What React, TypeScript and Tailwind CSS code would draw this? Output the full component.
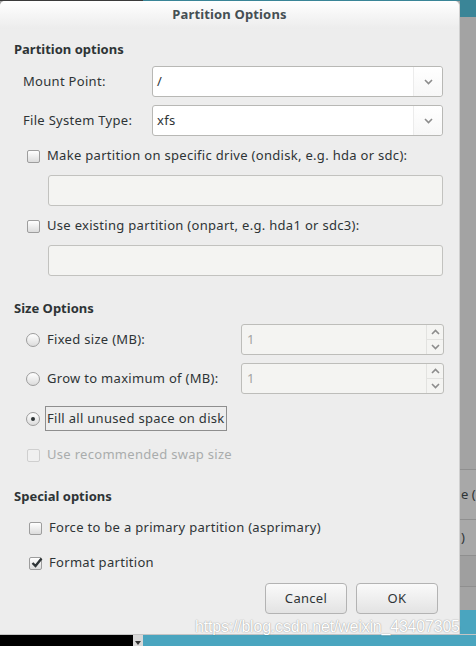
import React from "react";

const font = { fontFamily: '"Noto Sans", "DejaVu Sans", sans-serif' };

function Chevron({ up = false }: { up?: boolean }) {
  return (
    <svg width="9" height="6" viewBox="0 0 9 6">
      <path
        d={up ? "M1 5 L4.5 1.5 L8 5" : "M1 1 L4.5 4.5 L8 1"}
        fill="none"
        stroke="#8c8c8c"
        strokeWidth="1.6"
      />
    </svg>
  );
}

function Check({ checked = false, disabled = false }: { checked?: boolean; disabled?: boolean }) {
  return (
    <div
      className={`w-[13px] h-[13px] rounded-[2px] border relative shrink-0 ${
        disabled
          ? "border-[#cfcfcf] bg-[#f0f0f0]"
          : "border-[#9d9d9d] bg-gradient-to-b from-[#ffffff] to-[#dcdcdc]"
      }`}
    >
      {checked && (
        <svg className="absolute left-[0px] top-[-2px]" width="14" height="14" viewBox="0 0 14 14">
          <path d="M2.5 7 L5.5 10 L11.5 2.5" fill="none" stroke="#2e3436" strokeWidth="2.4" />
        </svg>
      )}
    </div>
  );
}

function Radio({ checked = false }: { checked?: boolean }) {
  return (
    <div className="w-[14px] h-[14px] rounded-full border border-[#9d9d9d] bg-gradient-to-b from-[#ffffff] to-[#dcdcdc] flex items-center justify-center shrink-0">
      {checked && <div className="w-[4px] h-[4px] rounded-full bg-[#2e3436]" />}
    </div>
  );
}

function Combo({ value }: { value: string }) {
  return (
    <div className="w-[291px] h-[31px] bg-white border border-[#b8b8b5] rounded-[3px] flex">
      <div className="flex-1 flex items-center pl-[4px] text-[13px] text-[#2e3436]">{value}</div>
      <div className="w-[29px] border-l border-[#ececec] flex items-center justify-center bg-gradient-to-b from-[#ffffff] to-[#f7f7f7] rounded-r-[3px]">
        <Chevron />
      </div>
    </div>
  );
}

function Spin() {
  return (
    <div className="w-[203px] h-[31px] bg-[#f4f4f2] border border-[#bdbdba] rounded-[3px] flex">
      <div className="flex-1 flex items-center pl-[5px] text-[13px] text-[#a3a3a3]">1</div>
      <div className="w-[17px] border-l border-[#e2e2e0] flex flex-col">
        <div className="flex-1 flex items-center justify-center border-b border-[#e2e2e0]">
          <Chevron up />
        </div>
        <div className="flex-1 flex items-center justify-center">
          <Chevron />
        </div>
      </div>
    </div>
  );
}

function Entry() {
  return <div className="ml-[48px] w-[395px] h-[31px] bg-[#f4f4f2] border border-[#c2c2bf] rounded-[3px]" />;
}

export default function App() {
  return (
    <div className="w-[476px] h-[646px] flex flex-col overflow-hidden bg-[#a4a4a4] relative" style={font}>
      {/* top strip */}
      <div className="h-[1px] flex shrink-0">
        <div className="w-[143px] bg-[#3b3b3b]" />
        <div className="flex-1 bg-[#3a8597]" />
      </div>
      <div className="flex flex-1">
        {/* dialog */}
        <div className="w-[460px] h-[633px] bg-[#ededed] rounded-t-[5px] flex flex-col text-[#2e3436] text-[13px] tracking-[0.3px] border-r border-[#d0d0d0]">
          <div className="h-[28px] shrink-0 bg-gradient-to-b from-[#ffffff] to-[#ececec] rounded-t-[5px] flex items-center justify-center font-bold text-[#454f53] text-[13px] tracking-[0.15px]">
            Partition Options
          </div>
          <div className="mt-[11px] h-[20px] pl-[14px] flex items-center font-bold tracking-normal">Partition options</div>
          <div className="mt-[6px] flex items-center h-[31px]">
            <div className="w-[152px] pl-[23px]">Mount Point:</div>
            <Combo value="/" />
          </div>
          <div className="mt-[8px] flex items-center h-[31px]">
            <div className="w-[152px] pl-[23px]">File System Type:</div>
            <Combo value="xfs" />
          </div>
          <div className="mt-[11px] h-[18px] flex items-center pl-[27px] gap-[7px]">
            <Check />
            <span>Make partition on specific drive (ondisk, e.g. hda or sdc):</span>
          </div>
          <div className="mt-[10px]">
            <Entry />
          </div>
          <div className="mt-[11px] h-[18px] flex items-center pl-[27px] gap-[7px]">
            <Check />
            <span>Use existing partition (onpart, e.g. hda1 or sdc3):</span>
          </div>
          <div className="mt-[10px]">
            <Entry />
          </div>
          <div className="mt-[23px] h-[20px] pl-[14px] flex items-center font-bold tracking-normal">Size Options</div>
          <div className="mt-[5px] flex items-center h-[31px]">
            <div className="w-[241px] pl-[26px] flex items-center gap-[7px]">
              <Radio />
              <span>Fixed size (MB):</span>
            </div>
            <Spin />
          </div>
          <div className="mt-[8px] flex items-center h-[31px]">
            <div className="w-[241px] pl-[26px] flex items-center gap-[7px]">
              <Radio />
              <span>Grow to maximum of (MB):</span>
            </div>
            <Spin />
          </div>
          <div className="mt-[12px] flex items-center h-[25px] pl-[26px] gap-[5px]">
            <Radio checked />
            <span className="border border-[#8e8e8e] h-[25px] px-[1px] flex items-center">Fill all unused space on disk</span>
          </div>
          <div className="mt-[15px] h-[18px] flex items-center pl-[27px] gap-[7px] text-[#a9acac]">
            <Check disabled />
            <span>Use recommended swap size</span>
          </div>
          <div className="mt-[23px] h-[20px] pl-[14px] flex items-center font-bold tracking-normal">Special options</div>
          <div className="mt-[12px] h-[18px] flex items-center pl-[29px] gap-[7px]">
            <Check />
            <span>Force to be a primary partition (asprimary)</span>
          </div>
          <div className="mt-[17px] h-[18px] flex items-center pl-[29px] gap-[7px]">
            <Check checked />
            <span>Format partition</span>
          </div>
          <div className="mt-[11px] flex justify-end gap-[9px] pr-[21px]">
            <button className="w-[82px] h-[31px] rounded-[4px] border border-[#b3b3b3] bg-gradient-to-b from-[#fafafa] to-[#e3e3e3] text-[13px] text-[#2e3436] tracking-[0.3px]">
              Cancel
            </button>
            <button className="w-[82px] h-[31px] rounded-[4px] border border-[#b3b3b3] bg-gradient-to-b from-[#fafafa] to-[#e3e3e3] text-[13px] text-[#2e3436] tracking-[0.3px]">
              OK
            </button>
          </div>
        </div>
        {/* right strip: window behind */}
        <div className="flex-1 flex flex-col">
          <div className="h-[16px] bg-[#3a8597]" />
          <div className="h-[452px] bg-[#a3a3a3]" />
          <div className="h-[50px] bg-[#a8a8a8] border-t border-[#8f8f8f] flex items-center text-[13px] text-[#2e3436] pl-[1px]">e (</div>
          <div className="h-[36px] bg-[#a8a8a8] border-t border-[#8f8f8f] flex items-center text-[13px] text-[#2e3436] pl-[1px]">)</div>
          <div className="h-[31px] bg-[#9f9f9f] border-t border-[#8f8f8f]" />
          <div className="h-[24px] bg-[#a3a3a3] border-t border-[#8f8f8f]" />
          <div className="flex-1 bg-[#4aa5bf]" />
        </div>
      </div>
      {/* bottom strip */}
      <div className="h-[12px] flex shrink-0 border-t border-[#c4c4c4]">
        <div className="w-[133px] bg-black" />
        <div className="w-[10px] bg-[#d8d8d8] flex items-end justify-center">
          <svg width="6" height="5" viewBox="0 0 6 5">
            <path d="M0 0 L3 4 L6 0" fill="#333" />
          </svg>
        </div>
        <div className="flex-1 bg-[#4aa5bf]" />
      </div>
      {/* watermark */}
      <div
        className="absolute left-[195px] top-[615px] text-[16px] text-white tracking-[-0.2px]"
        style={{ fontFamily: '"Liberation Sans", Arial, sans-serif', textShadow: "0 0 1px rgba(0,0,0,0.35), 0 0 2px rgba(0,0,0,0.15)" }}
      >
        https://blog.csdn.net/weixin_43407305
      </div>
    </div>
  );
}
